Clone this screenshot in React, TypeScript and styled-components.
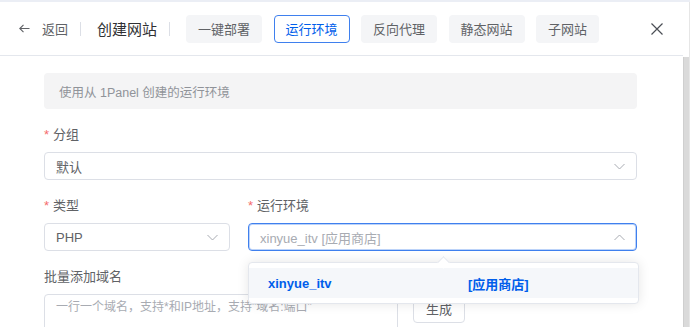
import React from "react";
import styled, { createGlobalStyle } from "styled-components";

const GlobalStyle = createGlobalStyle`
  html, body {
    margin: 0;
    padding: 0;
    background: #fff;
    overflow: hidden;
  }
  body {
    font-family: "Liberation Sans", "Noto Sans CJK SC", sans-serif;
  }
`;

const Frame = styled.div`
  width: 690px;
  height: 327px;
  box-sizing: border-box;
  border-top: 2px solid #ebeef5;
  display: flex;
  overflow: hidden;
  background: #fff;
`;

const Main = styled.div`
  flex: 1;
  min-width: 0;
  display: flex;
  flex-direction: column;
`;

const Header = styled.header`
  height: 53px;
  flex-shrink: 0;
  display: flex;
  align-items: center;
  padding: 0 20px 0 19px;
  border-bottom: 1px solid #e4e7ed;
`;

const BackLink = styled.div`
  display: flex;
  align-items: center;
  gap: 12px;
  font-size: 13px;
  color: #606266;
`;

const Divider = styled.span`
  width: 1px;
  height: 14px;
  background: #dcdfe6;
  margin: 0 16px 0 12px;
`;

const Title = styled.span`
  font-size: 15px;
  color: #303133;
`;

const Tabs = styled.div`
  display: flex;
  gap: 11.5px;
`;

const Tab = styled.div<{ $active?: boolean }>`
  height: 28px;
  box-sizing: border-box;
  padding: 0 11px;
  display: flex;
  align-items: center;
  border-radius: 4px;
  font-size: 13px;
  border: 1px solid ${(p) => (p.$active ? "#3f80ee" : "transparent")};
  background: ${(p) => (p.$active ? "#fff" : "#f4f5f7")};
  color: ${(p) => (p.$active ? "#005eeb" : "#606266")};
`;

const CloseButton = styled.div`
  margin-left: auto;
  display: flex;
`;

const Content = styled.div`
  padding: 17px 46px 0 44px;
`;

const Alert = styled.div`
  height: 36px;
  display: flex;
  align-items: center;
  padding: 0 15px;
  border-radius: 4px;
  background: #f4f4f5;
  color: #909399;
  font-size: 12.5px;
  margin-bottom: 14px;
`;

const FormItem = styled.div`
  position: relative;
  margin-bottom: 14px;
`;

const Label = styled.div`
  height: 24px;
  line-height: 24px;
  font-size: 13px;
  color: #606266;
  margin-bottom: 5px;
`;

const Star = styled.span`
  color: #f56c6c;
  margin-right: 4px;
`;

const Select = styled.div<{ $focused?: boolean }>`
  height: 28px;
  box-sizing: border-box;
  display: flex;
  align-items: center;
  justify-content: space-between;
  padding: 0 11px;
  border-radius: 4px;
  border: 1px solid ${(p) => (p.$focused ? "#3f80ee" : "#dcdfe6")};
  box-shadow: ${(p) =>
    p.$focused ? "inset 0 0 0 1px rgba(63, 128, 238, 0.35)" : "none"};
  font-size: 13px;
  color: #606266;
`;

const Placeholder = styled.span`
  color: #a8abb2;
`;

const Row = styled.div`
  display: grid;
  grid-template-columns: 186px 1fr;
  column-gap: 18px;
`;

const Popper = styled.div`
  position: absolute;
  left: 0;
  top: calc(100% + 11px);
  width: calc(100% + 2px);
  box-sizing: border-box;
  padding: 5px 0;
  background: #fff;
  border: 1px solid #e4e7ed;
  border-radius: 4px;
  box-shadow: 0 0 12px rgba(0, 0, 0, 0.1);
  z-index: 10;
`;

const PopperArrow = styled.span`
  position: absolute;
  top: -5px;
  left: calc(50% - 5px);
  width: 8px;
  height: 8px;
  background: #fff;
  border-top: 1px solid #e4e7ed;
  border-left: 1px solid #e4e7ed;
  transform: rotate(45deg);
`;

const Option = styled.div`
  height: 30px;
  display: flex;
  align-items: center;
  padding: 0 19px;
  background: #f5f7fa;
  font-size: 13px;
  font-weight: bold;
  color: #005eeb;
`;

const OptionName = styled.span`
  width: 200px;
`;

const DomainRow = styled.div`
  display: flex;
  align-items: flex-start;
  gap: 15px;
`;

const TextArea = styled.textarea`
  width: 354px;
  height: 60px;
  box-sizing: border-box;
  padding: 5px 11px;
  border: 1px solid #dcdfe6;
  border-radius: 4px;
  font-family: inherit;
  font-size: 12px;
  line-height: 15px;
  color: #606266;
  resize: none;
  outline: none;
  &::placeholder {
    color: #a8abb2;
  }
`;

const Button = styled.button`
  height: 29px;
  padding: 0 12px;
  border: 1px solid #dcdfe6;
  border-radius: 4px;
  background: #fff;
  font-family: inherit;
  font-size: 13px;
  color: #606266;
`;

const ScrollTrack = styled.div`
  width: 7px;
  flex-shrink: 0;
  box-sizing: border-box;
  padding-top: 55px;
  border-right: 1px solid #e6e6e6;
  display: flex;
`;

const ScrollThumb = styled.div`
  flex: 1;
  background: #dadada;
  border-left: 1px solid #cfcfcf;
`;

const Chevron = ({ up }: { up?: boolean }) => (
  <svg width="11" height="7" viewBox="0 0 11 7">
    <path
      d={up ? "M0.5 6L5.5 1L10.5 6" : "M0.5 1L5.5 6L10.5 1"}
      fill="none"
      stroke="#a8abb2"
      strokeWidth="1"
    />
  </svg>
);

const tabs = ["一键部署", "运行环境", "反向代理", "静态网站", "子网站"];

export default function App() {
  return (
    <>
      <GlobalStyle />
      <Frame>
        <Main>
          <Header>
            <BackLink>
              <svg width="11" height="9" viewBox="0 0 11 9">
                <path
                  d="M10.5 4.5H0.8M4.5 0.8L0.8 4.5L4.5 8.2"
                  fill="none"
                  stroke="#606266"
                  strokeWidth="1.1"
                />
              </svg>
              返回
            </BackLink>
            <Divider />
            <Title>创建网站</Title>
            <Divider />
            <Tabs>
              {tabs.map((t) => (
                <Tab key={t} $active={t === "运行环境"}>
                  {t}
                </Tab>
              ))}
            </Tabs>
            <CloseButton>
              <svg width="12" height="12" viewBox="0 0 12 12">
                <path
                  d="M0.5 0.5L11.5 11.5M11.5 0.5L0.5 11.5"
                  stroke="#4b4e55"
                  strokeWidth="1.2"
                />
              </svg>
            </CloseButton>
          </Header>
          <Content>
            <Alert>使用从 1Panel 创建的运行环境</Alert>
            <FormItem>
              <Label>
                <Star>*</Star>分组
              </Label>
              <Select>
                <span>默认</span>
                <Chevron />
              </Select>
            </FormItem>
            <Row>
              <FormItem>
                <Label>
                  <Star>*</Star>类型
                </Label>
                <Select>
                  <span>PHP</span>
                  <Chevron />
                </Select>
              </FormItem>
              <FormItem>
                <Label>
                  <Star>*</Star>运行环境
                </Label>
                <Select $focused>
                  <Placeholder>xinyue_itv [应用商店]</Placeholder>
                  <Chevron up />
                </Select>
                <Popper>
                  <PopperArrow />
                  <Option>
                    <OptionName>xinyue_itv</OptionName>
                    <span>[应用商店]</span>
                  </Option>
                </Popper>
              </FormItem>
            </Row>
            <FormItem>
              <Label>批量添加域名</Label>
              <DomainRow>
                <TextArea placeholder={'一行一个域名，支持*和IP地址，支持"域名:端口"'} />
                <Button>生成</Button>
              </DomainRow>
            </FormItem>
          </Content>
        </Main>
        <ScrollTrack>
          <ScrollThumb />
        </ScrollTrack>
      </Frame>
    </>
  );
}
